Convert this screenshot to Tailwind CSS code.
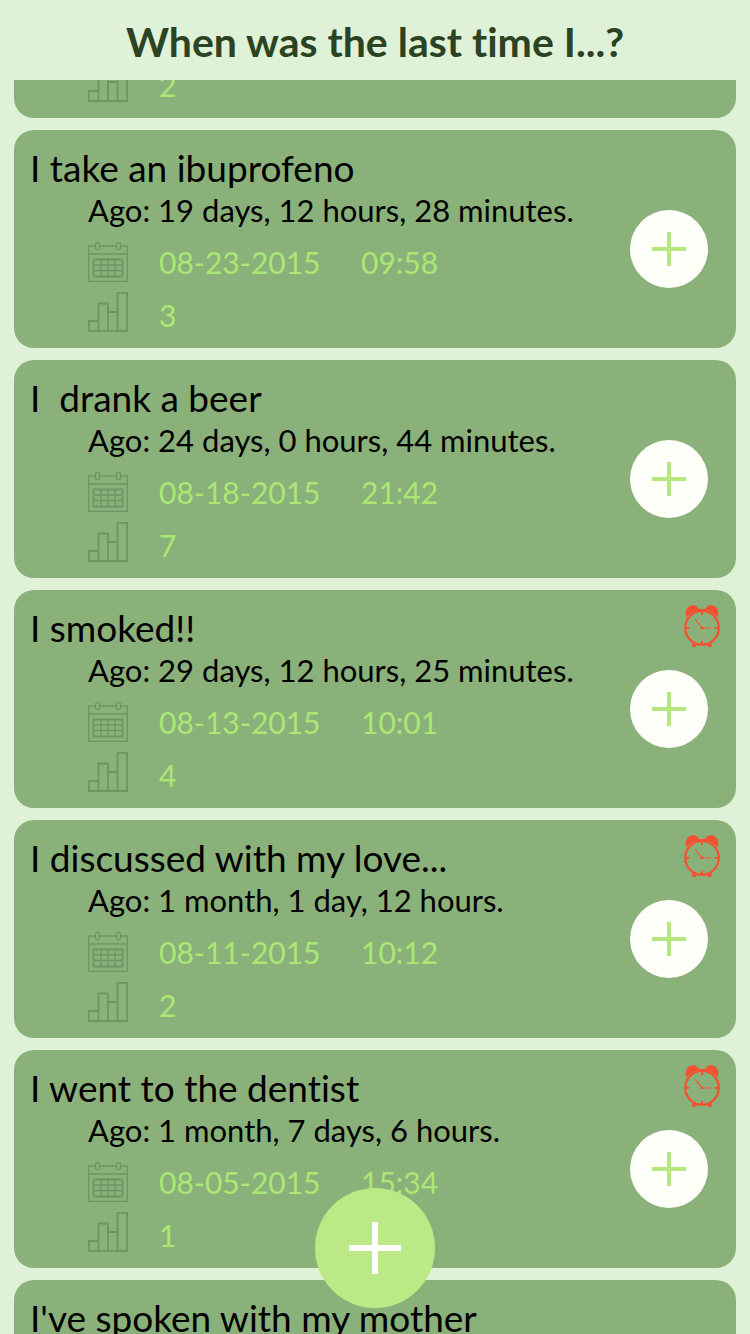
<!DOCTYPE html>
<html lang="en">
<head>
<meta charset="utf-8">
<meta name="viewport" content="width=device-width, initial-scale=1">
<title>When was the last time I...?</title>
<script src="https://cdn.jsdelivr.net/npm/@tailwindcss/browser@4"></script>
</head>
<body class="flex h-screen flex-col overflow-hidden bg-[#dff1d6] font-['Lato',sans-serif] text-black [font-variant-ligatures:none]">
<svg class="hidden" aria-hidden="true">
  <symbol id="calendar" viewBox="0 0 40 40">
    <g fill="none" stroke="#6f9464" stroke-width="1.300">
      <path d="M7.500 4H.7v35.300h38.600V4h-6.800M11.500 4h17M.7 12h38.600"/>
      <rect x="7.500" y=".7" width="4" height="7" rx="1.500"/>
      <rect x="28.500" y=".7" width="4" height="7" rx="1.500"/>
      <path stroke-width="1.800" d="M5.500 17.500h29v17h-29z"/>
      <path d="M5.500 23h29M5.500 28.500h29M13 17.500v17M20 17.500v17M27 17.500v17"/>
    </g>
  </symbol>
  <symbol id="chart" viewBox="0 0 40 40">
    <path fill="none" stroke="#6f9464" stroke-width="1.800" d="M.9 29h9.600v10H.9zM10.500 11.500H20V39h-9.500zM20 20h9.500v19H20zM29.500.9h9.600V39h-9.600z"/>
  </symbol>
  <symbol id="plus" viewBox="0 0 34 34">
    <path fill="none" stroke="currentColor" stroke-width="4" d="M17 0v34M0 17h34"/>
  </symbol>
  <symbol id="alarm" viewBox="0 0 36 42">
    <g fill="#f5502f">
      <path d="M2.500 12.500C0 6.500 3.500.3 9 .3c3.200 0 5.500 2 6 4.700C9.500 6.300 5 9 2.500 12.500zM33.500 12.500C36 6.500 32.500.3 27 .3c-3.200 0-5.500 2-6 4.700 5.500 1.300 10 4 12.500 7.500z"/>
      <path d="M14 4h8v2.500h-8zM8.300 37l3.800 2-.3 3H8.300zM27.700 37l-3.800 2 .3 3h3.500z"/>
    </g>
    <g fill="none" stroke="#f5502f">
      <circle cx="18" cy="22.800" r="16.800" stroke-width="2.200"/>
      <path stroke-width="1.800" d="M18 6v4M18 36v4M1 22.800h4.500M30.500 22.800H35"/>
      <path stroke-width="1.200" d="M11 14l7 9h9"/>
      <path stroke-width="1.600" d="M10 39.500h16"/>
    </g>
    <circle cx="18" cy="22.800" r="1.500" fill="#f5502f"/>
  </symbol>
</svg>

<header class="flex h-20 shrink-0 items-center justify-center pt-1">
  <h1 class="text-[41px] leading-[48px] font-bold text-[#2b4223]">When was the last time I...?</h1>
</header>

<main class="min-h-0 flex-1 overflow-hidden px-[14px]">
  <ul id="list" class="flex flex-col gap-3">
    <li class="flex h-[38px] items-end overflow-hidden rounded-b-[20px] bg-[#8bb17b] pb-4 pl-[74px]">
      <div class="flex shrink-0 items-start gap-[31px]">
        <svg class="size-10"><use href="#chart"/></svg>
        <span class="h-10 text-[30px] leading-[46px] text-[#aae873]">2</span>
      </div>
    </li>
  </ul>
</main>

<button type="button" aria-label="Add event" class="fixed bottom-[26px] left-1/2 grid size-[120px] -translate-x-1/2 place-items-center rounded-full bg-[#bae986] text-white">
  <svg class="size-[52px]" viewBox="0 0 52 52"><path fill="none" stroke="currentColor" stroke-width="6" d="M26 0v52M0 26h52"/></svg>
</button>

<template id="card">
  <li class="relative flex h-[218px] shrink-0 items-center justify-between rounded-[20px] bg-[#8bb17b] pr-7 pl-4">
    <div class="h-full pt-[14px]">
      <h2 class="text-[37px] leading-[48px] whitespace-pre"></h2>
      <div class="pl-[58px]">
        <p class="text-[31px] leading-9 whitespace-nowrap"></p>
        <div class="mt-[14px] flex items-center gap-[31px] text-[30px] leading-10 text-[#aae873]">
          <svg class="size-10"><use href="#calendar"/></svg>
          <div class="flex"><span class="date w-[202px]"></span><span class="time"></span></div>
        </div>
        <div class="mt-[10px] flex items-start gap-[31px] text-[30px] leading-[46px] text-[#aae873]">
          <svg class="size-10"><use href="#chart"/></svg>
          <span class="count"></span>
        </div>
      </div>
    </div>
    <button type="button" class="mt-5 grid size-[78px] place-items-center rounded-full bg-[#fffffa] text-[#b6e77f]">
      <svg class="size-[34px]"><use href="#plus"/></svg>
    </button>
    <svg class="alarm absolute top-[15px] right-4 h-[42px] w-9" role="img" aria-label="Alarm set"><use href="#alarm"/></svg>
  </li>
</template>

<script>
  const events = [
    ["I take an ibuprofeno", "Ago: 19 days, 12 hours, 28 minutes.", "08-23-2015", "09:58", "3", false],
    ["I  drank a beer", "Ago: 24 days, 0 hours, 44 minutes.", "08-18-2015", "21:42", "7", false],
    ["I smoked!!", "Ago: 29 days, 12 hours, 25 minutes.", "08-13-2015", "10:01", "4", true],
    ["I discussed with my love...", "Ago: 1 month, 1 day, 12 hours.", "08-11-2015", "10:12", "2", true],
    ["I went to the dentist", "Ago: 1 month, 7 days, 6 hours.", "08-05-2015", "15:34", "1", true],
    ["I've spoken with my mother", "", "", "", "", false]
  ];
  const list = document.getElementById("list");
  const template = document.getElementById("card");
  for (const [title, ago, date, time, count, alarm] of events) {
    const card = template.content.cloneNode(true);
    card.querySelector("h2").textContent = title;
    card.querySelector("p").textContent = ago;
    card.querySelector(".date").textContent = date;
    card.querySelector(".time").textContent = time;
    card.querySelector(".count").textContent = count;
    card.querySelector("button").setAttribute("aria-label", "Log again: " + title);
    if (!alarm) card.querySelector(".alarm").remove();
    list.append(card);
  }
</script>
</body>
</html>
